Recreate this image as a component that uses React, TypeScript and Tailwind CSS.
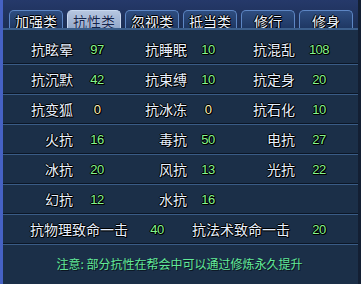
import React from "react";

const tabs = ["加强类", "抗性类", "忽视类", "抵当类", "修行", "修身"];

type Cell = { label: string; value: number };

const rows: Cell[][] = [
  [
    { label: "抗眩晕", value: 97 },
    { label: "抗睡眠", value: 10 },
    { label: "抗混乱", value: 108 },
  ],
  [
    { label: "抗沉默", value: 42 },
    { label: "抗束缚", value: 10 },
    { label: "抗定身", value: 20 },
  ],
  [
    { label: "抗变狐", value: 0 },
    { label: "抗冰冻", value: 0 },
    { label: "抗石化", value: 10 },
  ],
  [
    { label: "火抗", value: 16 },
    { label: "毒抗", value: 50 },
    { label: "电抗", value: 27 },
  ],
  [
    { label: "冰抗", value: 20 },
    { label: "风抗", value: 13 },
    { label: "光抗", value: 22 },
  ],
  [
    { label: "幻抗", value: 12 },
    { label: "水抗", value: 16 },
  ],
];

const outline =
  "[text-shadow:1px_0_0_#000,-1px_0_0_#000,0_1px_0_#000,0_-1px_0_#000,1px_1px_0_#000]";

function Label({ children }: { children: React.ReactNode }) {
  return (
    <div className={`text-right text-[14px] leading-none text-[#e6f0ff] ${outline}`}>{children}</div>
  );
}

function Value({ v }: { v: number }) {
  return (
    <div
      className={`text-center font-['Liberation_Sans',sans-serif] text-[13px] leading-none tracking-[-0.5px] ${outline} ${
        v === 0 ? "text-[#fff2b8]" : "text-[#84f58e]"
      }`}
    >
      {v}
    </div>
  );
}

function Separator() {
  return (
    <div className="flex flex-col">
      <div className="h-px bg-[#0b1626]" />
      <div className="h-px bg-[#3a5c86]" />
    </div>
  );
}

export default function App() {
  return (
    <div className="h-[284px] w-[361px] overflow-hidden bg-[#1b2f48] font-['Noto_Sans_CJK_SC',sans-serif]">
      <div className="flex h-full border-l-[3px] border-r-[3px] border-l-[#4662c4] border-r-[#131f33]">
        <div className="flex min-w-0 flex-1 flex-col">
          <div className="h-[28px] bg-gradient-to-b from-[#25396a] to-[#1c2f55]">
            <div className="flex gap-[4px] pl-[6px] pt-[10px]">
              {tabs.map((t) => {
                const active = t === "抗性类";
                return (
                  <div
                    key={t}
                    className={`flex h-[20px] w-[54px] items-center justify-center rounded-t-[5px] border border-b-0 text-[14px] leading-none ${
                      active
                        ? "border-[#c8d8f0] bg-gradient-to-b from-[#b6c6e0] to-[#8ea4c8] text-[#13234a] [text-shadow:0_0_1px_#e8f0ff]"
                        : `border-[#5d86c4] bg-gradient-to-b from-[#2e4d80] to-[#1d3560] text-[#eef4ff] ${outline}`
                    }`}
                  >
                    {t}
                  </div>
                );
              })}
            </div>
          </div>
          <div className="flex-1 border-t-2 border-t-[#3c5f8c] pt-[5px]">
            {rows.map((r, i) => (
              <div key={i}>
                <div className="grid h-[28px] grid-cols-[70px_48px_66px_42px_66px_48px] items-center">
                  {[0, 1, 2].map((c) =>
                    r[c] ? (
                      <React.Fragment key={c}>
                        <Label>{r[c].label}</Label>
                        <Value v={r[c].value} />
                      </React.Fragment>
                    ) : (
                      <React.Fragment key={c}>
                        <div />
                        <div />
                      </React.Fragment>
                    )
                  )}
                </div>
                <Separator />
              </div>
            ))}
            <div>
              <div className="grid h-[28px] grid-cols-[125px_58px_104px_58px] items-center">
                <Label>抗物理致命一击</Label>
                <Value v={40} />
                <Label>抗法术致命一击</Label>
                <Value v={20} />
              </div>
              <Separator />
            </div>
            <div className="flex h-[37px] items-center justify-center pr-[2px] text-[12px] leading-none text-[#62ea98] [text-shadow:1px_1px_0_#0a1420]">
              注意: 部分抗性在帮会中可以通过修炼永久提升
            </div>
          </div>
        </div>
      </div>
    </div>
  );
}
